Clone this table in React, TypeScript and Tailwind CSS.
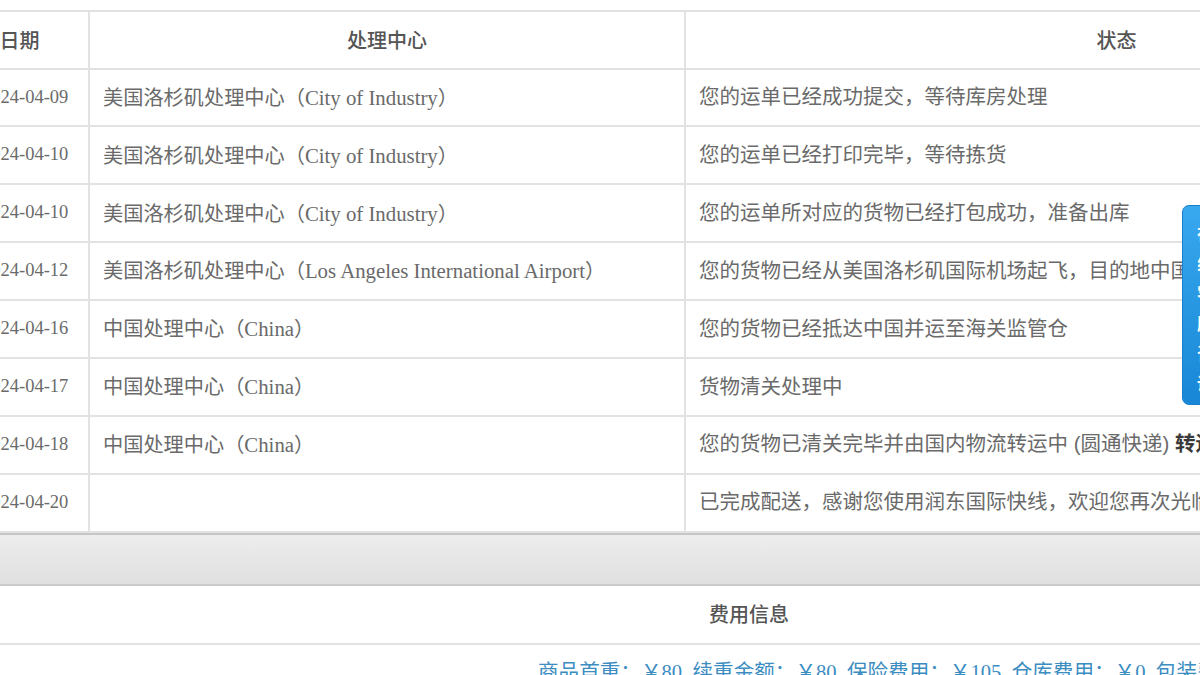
import React from "react";

const E = ({ children }: { children: React.ReactNode }) => (
  <span className="text-[20.8px]">{children}</span>
);

const rows: [string, React.ReactNode, React.ReactNode][] = [
  ["2024-04-09", <>美国洛杉矶处理中心（<E>City of Industry</E>）</>, "您的运单已经成功提交，等待库房处理"],
  ["2024-04-10", <>美国洛杉矶处理中心（<E>City of Industry</E>）</>, "您的运单已经打印完毕，等待拣货"],
  ["2024-04-10", <>美国洛杉矶处理中心（<E>City of Industry</E>）</>, "您的运单所对应的货物已经打包成功，准备出库"],
  ["2024-04-12", <>美国洛杉矶处理中心（<E>Los Angeles International Airport</E>）</>, "您的货物已经从美国洛杉矶国际机场起飞，目的地中国"],
  ["2024-04-16", <>中国处理中心（<E>China</E>）</>, "您的货物已经抵达中国并运至海关监管仓"],
  ["2024-04-17", <>中国处理中心（<E>China</E>）</>, "货物清关处理中"],
  [
    "2024-04-18",
    <>中国处理中心（<E>China</E>）</>,
    <>
      您的货物已清关完毕并由国内物流转运中 (圆通快递)&nbsp;<span className="font-bold text-[#3a3a3a]">转运单号</span>
    </>,
  ],
  ["2024-04-20", "", "已完成配送，感谢您使用润东国际快线，欢迎您再次光临"],
];

export default function App() {
  return (
    <div className="relative w-[1200px] h-[675px] overflow-hidden bg-white">
      <div className="ml-[-49px] w-[1596px] pt-[10px]">
        <div className="border-t-2 border-[#e2e2e2]">
          {/* header */}
          <div className="flex h-[57.5px] border-b-2 border-[#e2e2e2] text-[20px] text-[#555] font-medium [font-family:'Noto_Sans_CJK_SC',sans-serif]">
            <div className="w-[139px] shrink-0 border-r-2 border-[#e2e2e2] flex items-center justify-center">日期</div>
            <div className="w-[596px] shrink-0 border-r-2 border-[#e2e2e2] flex items-center justify-center">处理中心</div>
            <div className="flex-1 flex items-center justify-center">状态</div>
          </div>
          {rows.map(([d, c, s], i) => (
            <div key={i} className="flex h-[57.9px] border-b-2 border-[#e2e2e2] text-[#6a6a6a]">
              <div className="w-[139px] shrink-0 border-r-2 border-[#e2e2e2] flex items-center pl-[31px] text-[18.5px] [font-family:'Liberation_Serif',serif]">
                {d}
              </div>
              <div className="w-[596px] shrink-0 border-r-2 border-[#e2e2e2] flex items-center pl-[13px] text-[20.2px] whitespace-nowrap [font-family:'Liberation_Serif','Noto_Sans_CJK_SC',serif]">
                <span>{c}</span>
              </div>
              <div className="flex-1 flex items-center pl-[13px] text-[20.5px] whitespace-nowrap [font-family:'Liberation_Sans','Noto_Sans_CJK_SC',sans-serif]">
                <span>{s}</span>
              </div>
            </div>
          ))}
          {/* gray bar */}
          <div className="h-[53px] border-t-2 border-b-2 border-t-[#c6c6c6] border-b-[#cbcbcb] bg-gradient-to-b from-[#ededed] to-[#e0e0e0]" />
          {/* fee header */}
          <div className="h-[59px] border-b-2 border-[#e2e2e2] flex items-center justify-center text-[20px] font-medium text-[#555] [font-family:'Noto_Sans_CJK_SC',sans-serif]">
            费用信息
          </div>
          <div className="h-[60px] pl-[587px] pt-[12px] whitespace-nowrap text-[20.6px] text-[#3b8dc2] [font-family:'Liberation_Serif','Noto_Sans_CJK_SC',serif]">
            商品首重：￥80&nbsp;&nbsp;续重金额：￥80&nbsp;&nbsp;保险费用：￥105&nbsp;&nbsp;仓库费用：￥0&nbsp;&nbsp;包装费用：￥0
          </div>
        </div>
      </div>
      {/* floating blue tab */}
      <div className="absolute left-[1182px] top-[205px] w-[44px] h-[200px] rounded-l-[7px] border border-[#1a7fc8] bg-gradient-to-b from-[#38a8ef] to-[#1787d6] flex flex-col items-start pl-[14px] pt-[12px] text-white text-[17px] leading-[30px] font-bold [font-family:'Noto_Sans_CJK_SC',sans-serif]">
        <span>在</span>
        <span>线</span>
        <span>客</span>
        <span>服</span>
        <span>咨</span>
        <span>询</span>
      </div>
    </div>
  );
}
